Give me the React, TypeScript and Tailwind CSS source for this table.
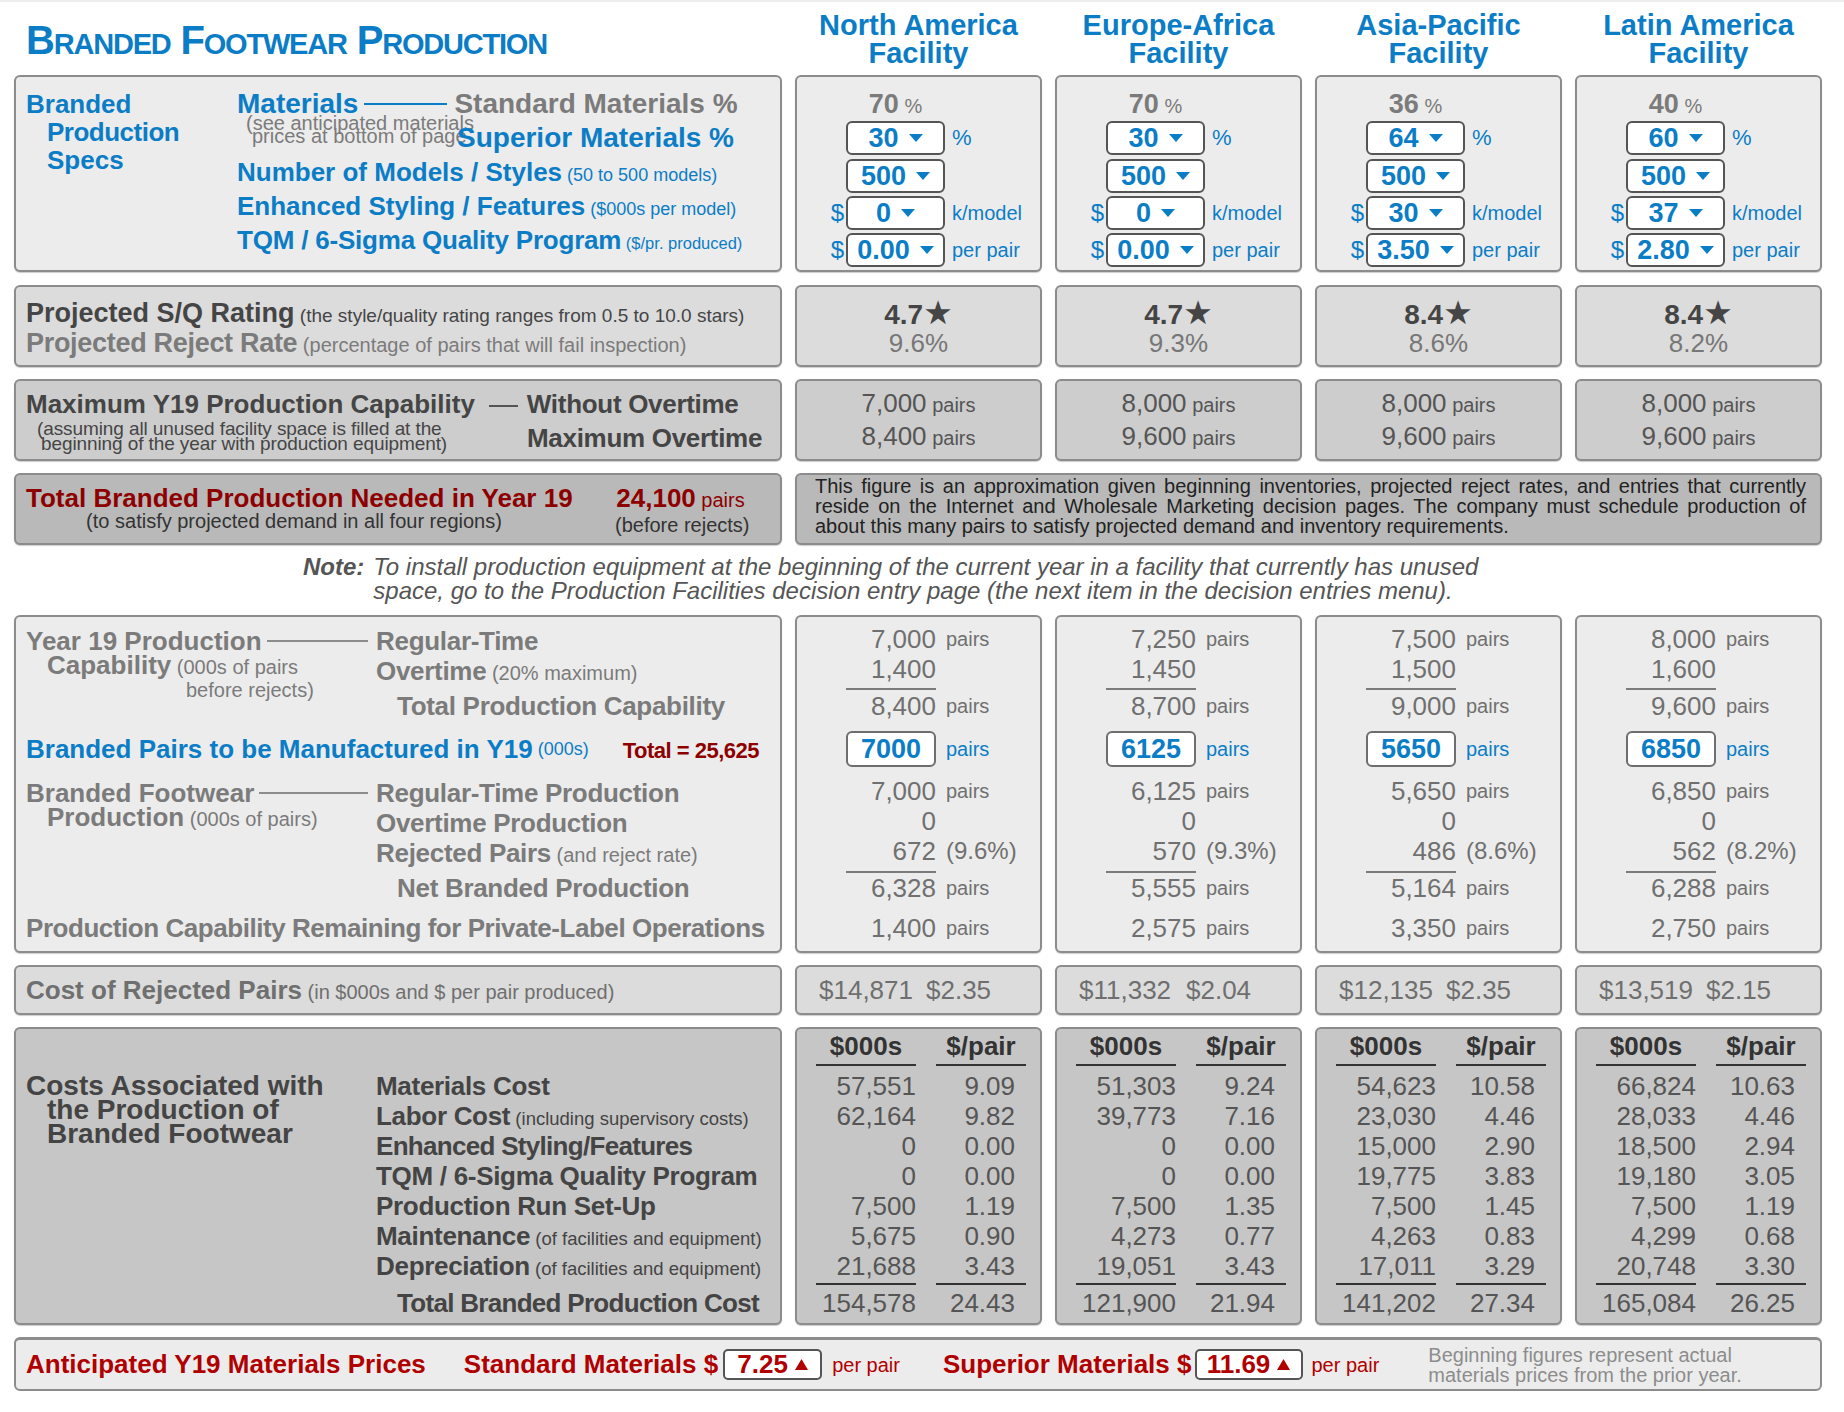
import React from "react";

type ColData = {
  h1: string;
  std: string; sup: string; models: string; style: string; tqm: string;
  rating: string; reject: string;
  cap1: string; cap2: string;
  reg: string; ot: string; tot: string; input: string;
  regP: string; otP: string; rej: string; rate: string; net: string; rem: string;
  ck: string; cp: string;
  costs: [string, string][];
  tk: string; tp: string;
};

const cols: ColData[] = [
  {
    h1: "North America", std: "70", sup: "30", models: "500", style: "0", tqm: "0.00",
    rating: "4.7", reject: "9.6%", cap1: "7,000", cap2: "8,400",
    reg: "7,000", ot: "1,400", tot: "8,400", input: "7000",
    regP: "7,000", otP: "0", rej: "672", rate: "(9.6%)", net: "6,328", rem: "1,400",
    ck: "$14,871", cp: "$2.35",
    costs: [["57,551", "9.09"], ["62,164", "9.82"], ["0", "0.00"], ["0", "0.00"], ["7,500", "1.19"], ["5,675", "0.90"], ["21,688", "3.43"]],
    tk: "154,578", tp: "24.43",
  },
  {
    h1: "Europe-Africa", std: "70", sup: "30", models: "500", style: "0", tqm: "0.00",
    rating: "4.7", reject: "9.3%", cap1: "8,000", cap2: "9,600",
    reg: "7,250", ot: "1,450", tot: "8,700", input: "6125",
    regP: "6,125", otP: "0", rej: "570", rate: "(9.3%)", net: "5,555", rem: "2,575",
    ck: "$11,332", cp: "$2.04",
    costs: [["51,303", "9.24"], ["39,773", "7.16"], ["0", "0.00"], ["0", "0.00"], ["7,500", "1.35"], ["4,273", "0.77"], ["19,051", "3.43"]],
    tk: "121,900", tp: "21.94",
  },
  {
    h1: "Asia-Pacific", std: "36", sup: "64", models: "500", style: "30", tqm: "3.50",
    rating: "8.4", reject: "8.6%", cap1: "8,000", cap2: "9,600",
    reg: "7,500", ot: "1,500", tot: "9,000", input: "5650",
    regP: "5,650", otP: "0", rej: "486", rate: "(8.6%)", net: "5,164", rem: "3,350",
    ck: "$12,135", cp: "$2.35",
    costs: [["54,623", "10.58"], ["23,030", "4.46"], ["15,000", "2.90"], ["19,775", "3.83"], ["7,500", "1.45"], ["4,263", "0.83"], ["17,011", "3.29"]],
    tk: "141,202", tp: "27.34",
  },
  {
    h1: "Latin America", std: "40", sup: "60", models: "500", style: "37", tqm: "2.80",
    rating: "8.4", reject: "8.2%", cap1: "8,000", cap2: "9,600",
    reg: "8,000", ot: "1,600", tot: "9,600", input: "6850",
    regP: "6,850", otP: "0", rej: "562", rate: "(8.2%)", net: "6,288", rem: "2,750",
    ck: "$13,519", cp: "$2.15",
    costs: [["66,824", "10.63"], ["28,033", "4.46"], ["18,500", "2.94"], ["19,180", "3.05"], ["7,500", "1.19"], ["4,299", "0.68"], ["20,748", "3.30"]],
    tk: "165,084", tp: "26.25",
  },
];

const Panel = ({ className = "", children }: { className?: string; children?: React.ReactNode }) => (
  <div className={"rounded-[6px] border-2 border-[#8c8c8c] shadow-[0_1px_1px_rgba(0,0,0,0.2)] " + className}>{children}</div>
);

const Band = ({ className = "", children }: { className?: string; children?: React.ReactNode }) => (
  <div className={"grid grid-cols-[768px_repeat(4,247px)] gap-x-[13px] pl-[14px] " + className}>{children}</div>
);

const Down = () => (
  <svg width="14" height="8" viewBox="0 0 14 8" className="ml-[10px] shrink-0">
    <path d="M0 0H14L7 8Z" fill="currentColor" />
  </svg>
);

const Up = () => (
  <svg width="13" height="11" viewBox="0 0 13 11" className="ml-[7px] shrink-0">
    <path d="M6.5 0L13 11H0Z" fill="currentColor" />
  </svg>
);

const Sel = ({ v }: { v: string }) => (
  <div className="w-[99px] h-[34px] rounded-[6px] border-2 border-[#555555] bg-white flex items-center justify-center text-[27px] leading-[30px] font-bold text-[#0b7dc6]">
    <span>{v}</span>
    <Down />
  </div>
);

const NumRow = ({ n, u, r, className = "" }: { n: string; u?: string; r?: string; className?: string }) => (
  <div className={"flex h-[30px] leading-[30px] text-[#707070] " + className}>
    <div className="w-[49px]" />
    <div className="w-[90px] text-right text-[26px]">{n}</div>
    {u && <span className="ml-[10px] text-[20px]">{u}</span>}
    {r && <span className="ml-[10px] text-[24px]">{r}</span>}
  </div>
);

const Uline = ({ className = "" }: { className?: string }) => (
  <div className={"ml-[49px] w-[90px] h-[2px] bg-[#7b7b7b] " + className} />
);

const Connector = ({ className = "" }: { className?: string }) => (
  <span className={"flex-1 h-[2px] bg-[#8c8c8c] mr-[8px] " + className} />
);

export default function App() {
  return (
    <div className="w-[1844px] h-[1412px] bg-white border-t-2 border-[#ececec] font-['Liberation_Sans',Arial,sans-serif] whitespace-nowrap">
      {/* Header */}
      <Band className="h-[73px]">
        <div className="pl-[12px] pt-[18px] leading-[40px] font-bold text-[#0b7dc6] tracking-[-1.2px]">
          <span className="text-[40px]">B</span>
          <span className="text-[29px]">RANDED</span>
          <span className="text-[40px]"> F</span>
          <span className="text-[29px]">OOTWEAR</span>
          <span className="text-[40px]"> P</span>
          <span className="text-[29px]">RODUCTION</span>
        </div>
        {cols.map((c) => (
          <div key={c.h1} className="pt-[9px] text-center text-[29px] leading-[28px] font-bold text-[#0b7dc6]">
            <div>{c.h1}</div>
            <div>Facility</div>
          </div>
        ))}
      </Band>

      {/* Band 1: specs */}
      <Band>
        <Panel className="h-[197px] bg-[#ececec] pl-[10px] pt-[10px] flex">
          <div className="w-[211px] pt-[3px] text-[26px] leading-[28px] font-bold text-[#0b7dc6]">
            <div>Branded</div>
            <div className="pl-[21px] tracking-[-0.5px]">Production</div>
            <div className="pl-[21px]">Specs</div>
          </div>
          <div className="flex-1">
            <div className="h-[34px] flex items-center leading-[34px] font-bold">
              <span className="text-[28px] text-[#0b7dc6]">Materials</span>
              <span className="ml-[6px] mr-[7px] w-[83px] h-[2px] bg-[#0b7dc6]" />
              <span className="text-[28px] text-[#7b7b7b]">Standard Materials %</span>
            </div>
            <div className="h-[34px] flex items-start leading-[34px]">
              <div className="ml-[9px] w-[211px] -mt-[4px] text-[20px] leading-[13px] text-[#7b7b7b]">
                <div>(see anticipated materials</div>
                <div className="pl-[6px]">prices at bottom of page</div>
              </div>
              <span className="text-[28px] font-bold text-[#0b7dc6]">Superior Materials %</span>
            </div>
            <div className="h-[34px] leading-[34px] text-[#0b7dc6]">
              <span className="text-[26px] font-bold">Number of Models / Styles</span>
              <span className="text-[18px]"> (50 to 500 models)</span>
            </div>
            <div className="h-[34px] leading-[34px] text-[#0b7dc6]">
              <span className="text-[26px] font-bold">Enhanced Styling / Features</span>
              <span className="text-[18px]"> ($000s per model)</span>
            </div>
            <div className="h-[34px] leading-[34px] text-[#0b7dc6]">
              <span className="text-[26px] font-bold tracking-[-0.2px]">TQM / 6-Sigma Quality Program</span>
              <span className="text-[16.5px]"> ($/pr. produced)</span>
            </div>
          </div>
        </Panel>
        {cols.map((c) => (
          <Panel key={c.h1} className="h-[197px] bg-[#ececec] pt-[10px]">
            <div className="flex h-[34px] leading-[34px]">
              <div className="w-[49px]" />
              <div className="w-[99px] text-center text-[#7b7b7b]">
                <span className="text-[27px] font-bold">{c.std}</span>
                <span className="text-[20px]"> %</span>
              </div>
            </div>
            <div className="flex h-[34px] leading-[34px]">
              <div className="w-[49px]" />
              <Sel v={c.sup} />
              <span className="ml-[7px] text-[22px] text-[#0b7dc6]">%</span>
            </div>
            <div className="mt-[4px] flex h-[34px] leading-[34px]">
              <div className="w-[49px]" />
              <Sel v={c.models} />
            </div>
            <div className="mt-[3px] flex h-[34px] leading-[34px]">
              <div className="w-[49px] pr-[2px] text-right text-[24px] text-[#0b7dc6]">$</div>
              <Sel v={c.style} />
              <span className="ml-[7px] text-[20px] text-[#0b7dc6]">k/model</span>
            </div>
            <div className="mt-[3px] flex h-[34px] leading-[34px]">
              <div className="w-[49px] pr-[2px] text-right text-[24px] text-[#0b7dc6]">$</div>
              <Sel v={c.tqm} />
              <span className="ml-[7px] text-[20px] text-[#0b7dc6]">per pair</span>
            </div>
          </Panel>
        ))}
      </Band>

      {/* Band 2: rating */}
      <Band className="mt-[13px]">
        <Panel className="h-[82px] bg-[#dcdcdc] pl-[10px] pt-[11px]">
          <div className="h-[30px] leading-[30px] text-[#454545]">
            <span className="text-[27px] font-bold">Projected S/Q Rating</span>
            <span className="text-[19px]"> (the style/quality rating ranges from 0.5 to 10.0 stars)</span>
          </div>
          <div className="h-[30px] leading-[30px] text-[#7b7b7b]">
            <span className="text-[27px] font-bold tracking-[-0.3px]">Projected Reject Rate</span>
            <span className="text-[20px]"> (percentage of pairs that will fail inspection)</span>
          </div>
        </Panel>
        {cols.map((c) => (
          <Panel key={c.h1} className="h-[82px] bg-[#dcdcdc] pt-[11px] text-center">
            <div className="h-[30px] leading-[30px] text-[28px] font-bold text-[#454545]">
              {c.rating}
              <span className="font-['DejaVu_Sans',sans-serif] text-[33px]">★</span>
            </div>
            <div className="h-[30px] leading-[30px] text-[26px] text-[#777777]">{c.reject}</div>
          </Panel>
        ))}
      </Band>

      {/* Band 3: capability */}
      <Band className="mt-[12px]">
        <Panel className="h-[82px] bg-[#cdcdcd] pl-[10px] pt-[8px] text-[#454545]">
          <div className="flex items-center h-[30px] leading-[30px]">
            <span className="text-[26px] font-bold">Maximum Y19 Production Capability</span>
            <span className="ml-[14px] mt-[4px] w-[29px] h-[2px] bg-[#555555]" />
            <span className="ml-[9px] text-[26px] font-bold tracking-[-0.3px]">Without Overtime</span>
          </div>
          <div className="flex items-start">
            <div className="w-[501px] pl-[11px] mt-[2px] text-[19px] leading-[15px] tracking-[-0.1px]">
              <div>(assuming all unused facility space is filled at the</div>
              <div className="pl-[4px]">beginning of the year with production equipment)</div>
            </div>
            <div className="mt-[4px] h-[30px] leading-[30px] text-[26px] font-bold tracking-[-0.3px]">Maximum Overtime</div>
          </div>
        </Panel>
        {cols.map((c) => (
          <Panel key={c.h1} className="h-[82px] bg-[#cdcdcd] pt-[7px] text-center text-[#555555]">
            <div className="h-[30px] leading-[30px]">
              <span className="text-[26px]">{c.cap1}</span>
              <span className="text-[20px]"> pairs</span>
            </div>
            <div className="mt-[3px] h-[30px] leading-[30px]">
              <span className="text-[26px]">{c.cap2}</span>
              <span className="text-[20px]"> pairs</span>
            </div>
          </Panel>
        ))}
      </Band>

      {/* Band 4: total needed */}
      <Band className="mt-[12px]">
        <Panel className="h-[72px] bg-[#b9b9b9] pl-[10px] pt-[10px] flex">
          <div className="w-[536px] text-center">
            <div className="text-left text-[26px] leading-[26px] font-bold text-[#8e0000]">Total Branded Production Needed in Year 19</div>
            <div className="text-[20px] leading-[21px] text-[#333333]">(to satisfy projected demand in all four regions)</div>
          </div>
          <div className="ml-[53px] w-[131px] text-center">
            <div className="leading-[26px] text-[#8e0000]">
              <span className="text-[26px] font-bold">24,100</span>
              <span className="text-[20px]"> pairs</span>
            </div>
            <div className="text-[20px] leading-[21px] text-[#333333]">(before rejects)</div>
          </div>
        </Panel>
        <Panel className="col-span-4 h-[72px] bg-[#b9b9b9] pl-[18px] pr-[14px] pt-[1px] text-[20px] leading-[20px] text-[#222222] whitespace-normal">
          <div className="text-justify [text-align-last:justify]">
            This figure is an approximation given beginning inventories, projected reject rates, and entries that currently
          </div>
          <div className="text-justify [text-align-last:justify]">
            reside on the Internet and Wholesale Marketing decision pages. The company must schedule production of
          </div>
          <div>about this many pairs to satisfy projected demand and inventory requirements.</div>
        </Panel>
      </Band>

      {/* Note */}
      <div className="h-[70px] pl-[303px] pt-[10px] flex text-[24px] leading-[24px] italic text-[#555555]">
        <span className="font-bold">Note:</span>
        <div className="ml-[9px]">
          <div>To install production equipment at the beginning of the current year in a facility that currently has unused</div>
          <div>space, go to the Production Facilities decision entry page (the next item in the decision entries menu).</div>
        </div>
      </div>

      {/* Band 5: production */}
      <Band>
        <Panel className="h-[338px] bg-[#ececec] pl-[10px] pt-[7px] text-[#7b7b7b]">
          <div className="flex">
            <div className="w-[350px]">
              <div className="mt-[5px] flex items-center h-[24px] leading-[24px]">
                <span className="text-[26px] font-bold">Year 19 Production</span>
                <Connector className="ml-[5px]" />
              </div>
              <div className="pl-[21px] h-[24px] leading-[24px]">
                <span className="text-[26px] font-bold">Capability</span>
                <span className="text-[20px]"> (000s of pairs</span>
              </div>
              <div className="mt-[2px] pl-[160px] text-[20px] leading-[23px]">before rejects)</div>
            </div>
            <div className="pt-[2px] tracking-[-0.3px]">
              <div className="h-[30px] leading-[30px] text-[26px] font-bold">Regular-Time</div>
              <div className="h-[30px] leading-[30px]">
                <span className="text-[26px] font-bold">Overtime</span>
                <span className="text-[20px] tracking-normal"> (20% maximum)</span>
              </div>
              <div className="mt-[5px] h-[30px] leading-[30px] pl-[21px] text-[26px] font-bold">Total Production Capability</div>
            </div>
          </div>
          <div className="mt-[10px] h-[36px] leading-[36px] flex items-start">
            <span className="text-[26px] font-bold text-[#0b7dc6]">Branded Pairs to be Manufactured in Y19</span>
            <span className="text-[18px] text-[#0b7dc6]">&nbsp;(000s)</span>
            <span className="ml-[34px] mt-[2px] text-[22px] tracking-[-0.5px] font-bold text-[#8e0000]">Total = 25,625</span>
          </div>
          <div className="mt-[9px] flex">
            <div className="w-[350px]">
              <div className="mt-[5px] flex items-center h-[24px] leading-[24px]">
                <span className="text-[26px] font-bold">Branded Footwear</span>
                <Connector className="ml-[5px]" />
              </div>
              <div className="pl-[21px] h-[24px] leading-[24px]">
                <span className="text-[26px] font-bold">Production</span>
                <span className="text-[20px]"> (000s of pairs)</span>
              </div>
            </div>
            <div className="pt-[2px] tracking-[-0.3px]">
              <div className="h-[30px] leading-[30px] text-[26px] font-bold">Regular-Time Production</div>
              <div className="h-[30px] leading-[30px] text-[26px] font-bold">Overtime Production</div>
              <div className="h-[30px] leading-[30px]">
                <span className="text-[26px] font-bold">Rejected Pairs</span>
                <span className="text-[20px] tracking-normal"> (and reject rate)</span>
              </div>
              <div className="mt-[5px] h-[30px] leading-[30px] pl-[21px] text-[26px] font-bold">Net Branded Production</div>
            </div>
          </div>
          <div className="mt-[10px] h-[30px] leading-[30px] text-[26px] font-bold tracking-[-0.45px]">
            Production Capability Remaining for Private-Label Operations
          </div>
        </Panel>
        {cols.map((c) => (
          <Panel key={c.h1} className="h-[338px] bg-[#ececec] pt-[7px]">
            <NumRow n={c.reg} u="pairs" />
            <NumRow n={c.ot} />
            <Uline className="mt-[4px]" />
            <NumRow n={c.tot} u="pairs" className="mt-[1px]" />
            <div className="mt-[10px] flex">
              <div className="w-[49px]" />
              <div className="w-[90px] h-[36px] rounded-[6px] border-2 border-[#6e6e6e] bg-white text-center text-[27px] leading-[32px] font-bold text-[#0b7dc6]">
                {c.input}
              </div>
              <span className="ml-[10px] text-[20px] leading-[36px] text-[#0b7dc6]">pairs</span>
            </div>
            <NumRow n={c.regP} u="pairs" className="mt-[9px]" />
            <NumRow n={c.otP} />
            <NumRow n={c.rej} r={c.rate} />
            <Uline className="mt-[5px]" />
            <NumRow n={c.net} u="pairs" />
            <NumRow n={c.rem} u="pairs" className="mt-[10px]" />
          </Panel>
        ))}
      </Band>

      {/* Band 6: cost of rejected */}
      <Band className="mt-[12px]">
        <Panel className="h-[50px] bg-[#dcdcdc] pl-[10px] leading-[46px] text-[#6f6f6f]">
          <span className="text-[26px] font-bold">Cost of Rejected Pairs</span>
          <span className="text-[20px]"> (in $000s and $ per pair produced)</span>
        </Panel>
        {cols.map((c) => (
          <Panel key={c.h1} className="h-[50px] bg-[#dcdcdc] pl-[22px] leading-[46px] text-[26px] text-[#6f6f6f] flex">
            <span className="w-[107px]">{c.ck}</span>
            <span>{c.cp}</span>
          </Panel>
        ))}
      </Band>

      {/* Band 7: costs */}
      <Band className="mt-[12px]">
        <Panel className="h-[298px] bg-[#c6c6c6] pl-[10px] flex text-[#444444]">
          <div className="w-[350px] pt-[45px] text-[28px] leading-[24px] font-bold">
            <div>Costs Associated with</div>
            <div className="pl-[21px]">the Production of</div>
            <div className="pl-[21px]">Branded Footwear</div>
          </div>
          <div className="pt-[42px] tracking-[-0.3px]">
            <div className="h-[30px] leading-[30px] text-[26px] font-bold">Materials Cost</div>
            <div className="h-[30px] leading-[30px]">
              <span className="text-[26px] font-bold">Labor Cost</span>
              <span className="text-[18.5px] tracking-normal"> (including supervisory costs)</span>
            </div>
            <div className="h-[30px] leading-[30px] text-[26px] font-bold tracking-[-0.7px]">Enhanced Styling/Features</div>
            <div className="h-[30px] leading-[30px] text-[26px] font-bold">TQM / 6-Sigma Quality Program</div>
            <div className="h-[30px] leading-[30px] text-[26px] font-bold">Production Run Set-Up</div>
            <div className="h-[30px] leading-[30px]">
              <span className="text-[26px] font-bold">Maintenance</span>
              <span className="text-[18.5px] tracking-normal"> (of facilities and equipment)</span>
            </div>
            <div className="h-[30px] leading-[30px]">
              <span className="text-[26px] font-bold">Depreciation</span>
              <span className="text-[18.5px] tracking-normal"> (of facilities and equipment)</span>
            </div>
            <div className="mt-[7px] h-[30px] leading-[30px] pl-[21px] text-[26px] font-bold tracking-[-0.7px]">Total Branded Production Cost</div>
          </div>
        </Panel>
        {cols.map((c) => (
          <Panel key={c.h1} className="h-[298px] bg-[#c6c6c6] pt-[2px]">
            <div className="flex h-[30px] leading-[30px] text-[26px] font-bold text-[#333333]">
              <div className="ml-[19px] w-[100px] text-center">$000s</div>
              <div className="ml-[20px] w-[90px] text-center">$/pair</div>
            </div>
            <div className="mt-[3px] flex">
              <div className="ml-[19px] w-[100px] h-[2px] bg-[#333333]" />
              <div className="ml-[20px] w-[90px] h-[2px] bg-[#333333]" />
            </div>
            <div className="mt-[5px]">
              {c.costs.map(([k, p], i) => (
                <div key={i} className="flex h-[30px] leading-[30px] text-[26px] text-[#555555]">
                  <div className="ml-[19px] w-[100px] text-right">{k}</div>
                  <div className="ml-[20px] w-[90px] pr-[11px] text-right">{p}</div>
                </div>
              ))}
            </div>
            <div className="mt-[2px] flex">
              <div className="ml-[19px] w-[100px] h-[2px] bg-[#333333]" />
              <div className="ml-[20px] w-[90px] h-[2px] bg-[#333333]" />
            </div>
            <div className="mt-[3px] flex h-[30px] leading-[30px] text-[26px] text-[#555555]">
              <div className="ml-[19px] w-[100px] text-right">{c.tk}</div>
              <div className="ml-[20px] w-[90px] pr-[11px] text-right">{c.tp}</div>
            </div>
          </Panel>
        ))}
      </Band>

      {/* Band 8: materials prices */}
      <div className="mt-[12px] ml-[14px] w-[1808px] h-[54px] rounded-[6px] border-2 border-t-[3px] border-[#8c8c8c] bg-[#ececec] flex items-center pl-[10px] text-[#b00000]">
        <span className="text-[26px] font-bold">Anticipated Y19 Materials Prices</span>
        <span className="ml-[38px] text-[26px] font-bold">Standard Materials $</span>
        <div className="ml-[5px] w-[99px] h-[31px] rounded-[5px] border-2 border-[#555555] bg-white flex items-center justify-center text-[26px] leading-[27px] font-bold">
          <span>7.25</span>
          <Up />
        </div>
        <span className="ml-[10px] text-[20px]">per pair</span>
        <span className="ml-[43px] text-[26px] font-bold">Superior Materials $</span>
        <div className="ml-[3px] w-[108px] h-[31px] rounded-[5px] border-2 border-[#555555] bg-white flex items-center justify-center text-[26px] leading-[27px] font-bold">
          <span>11.69</span>
          <Up />
        </div>
        <span className="ml-[9px] text-[20px]">per pair</span>
        <div className="ml-[49px] text-[20px] leading-[20px] text-[#8c8c8c]">
          <div>Beginning figures represent actual</div>
          <div>materials prices from the prior year.</div>
        </div>
      </div>
    </div>
  );
}
